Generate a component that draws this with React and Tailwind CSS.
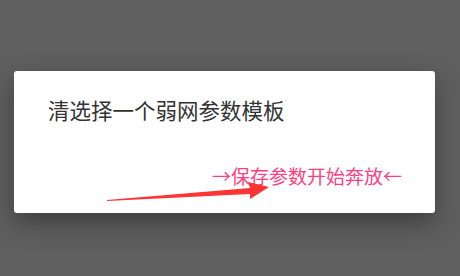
export default function App() {
  return (
    <div className="relative h-[276px] w-[460px] overflow-hidden bg-[#5f5f60] pt-[71px] pl-[14px] font-['Noto_Sans_CJK_SC',sans-serif]">
      <div className="flex h-[142px] w-[421px] flex-col rounded-[3px] bg-white shadow-[0_10px_24px_rgba(0,0,0,0.35)]">
        <h1 className="pl-[34px] pt-[28px] text-[21.5px] leading-[22px] text-[#333]">
          清选择一个弱网参数模板
        </h1>
        <div className="mt-auto flex justify-end pb-[28px] pr-[33px]">
          <button className="text-[19px] leading-[19px] text-[#ff4081]">
            →保存参数开始奔放←
          </button>
        </div>
      </div>
      {/* red annotation arrow drawn over the dialog */}
      <svg
        className="absolute left-0 top-0"
        width="460"
        height="276"
        viewBox="0 0 460 276"
      >
        <polygon
          points="107,200 250,188 248,182 269,187 250,199 250,194 107,201"
          fill="#ff3434"
        />
      </svg>
    </div>
  );
}
